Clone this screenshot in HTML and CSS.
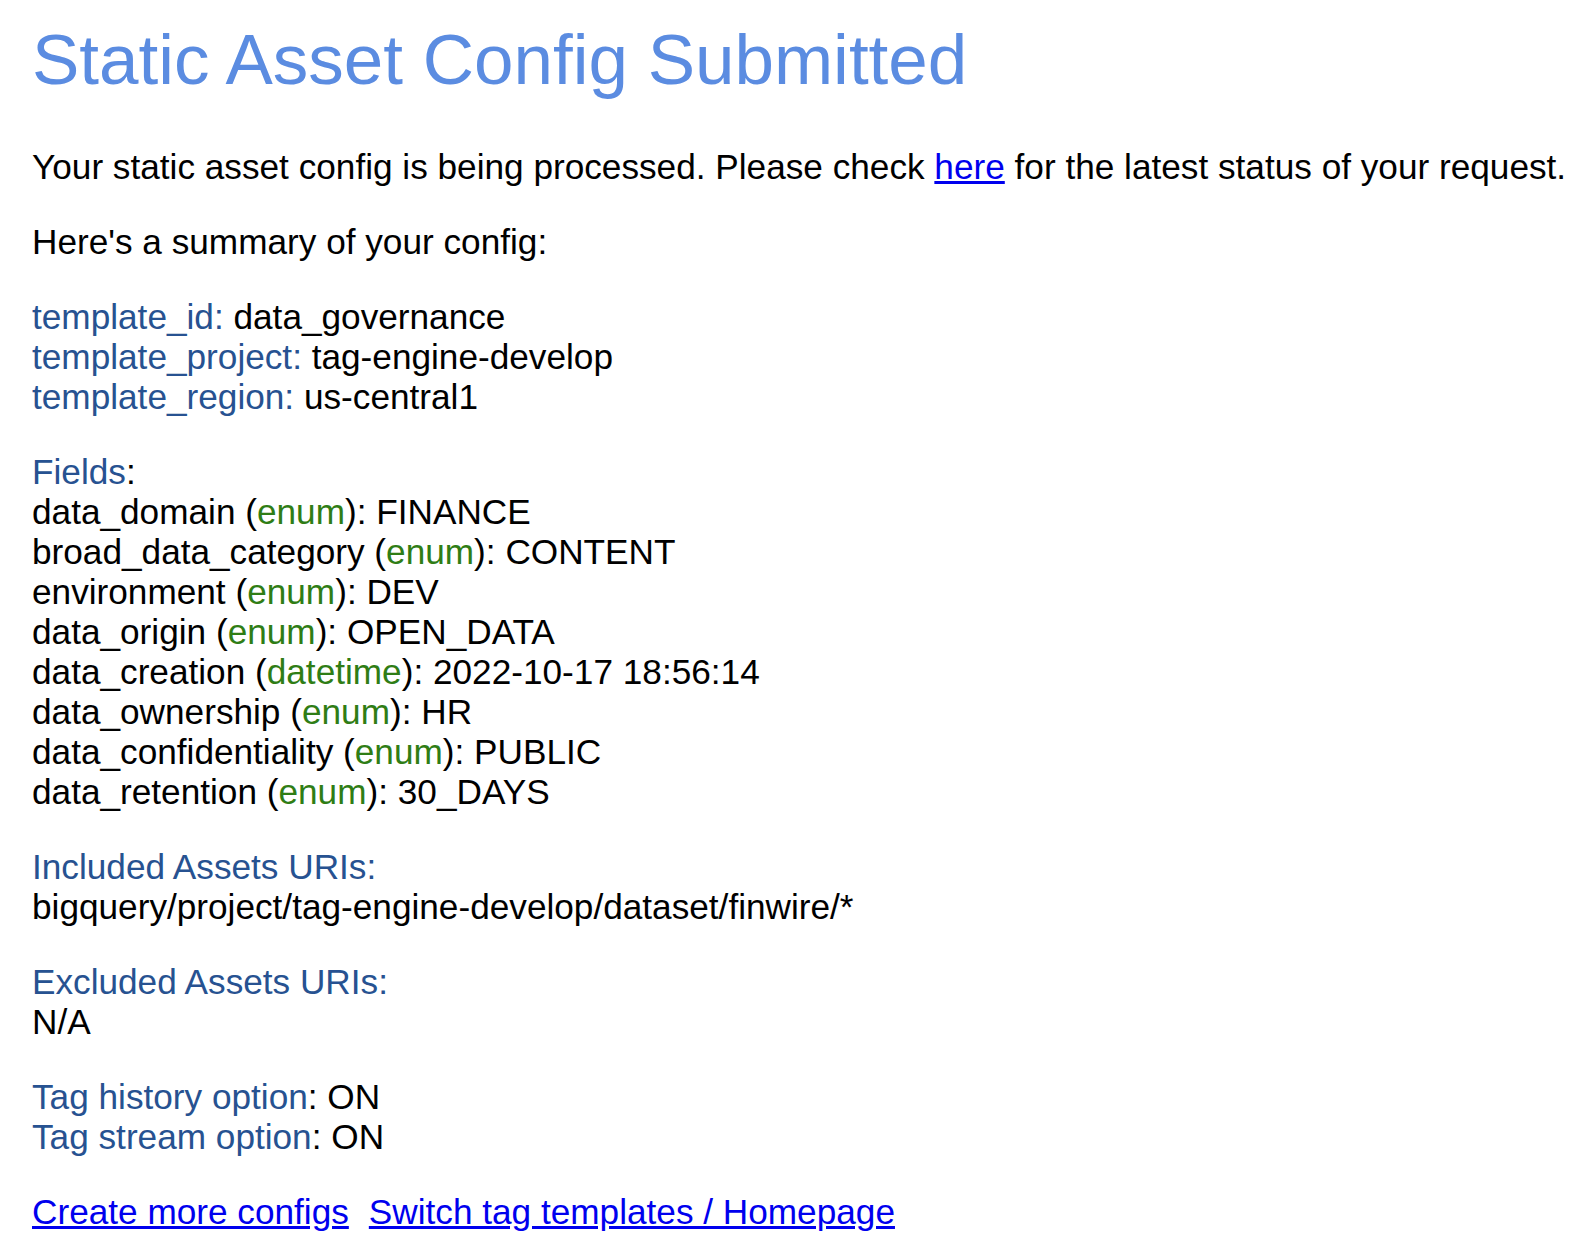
FILE: index.html
```html
<!DOCTYPE html>
<html lang="en">
<head>
<meta charset="utf-8">
<title>Static Asset Config Submitted</title>
<link rel="stylesheet" href="styles.css">
</head>
<body>
<main class="page">
  <h1 class="title">Static Asset Config Submitted</h1>

  <p class="block">Your static asset config is being processed. Please check <a href="#">here</a> for the latest status of your request.</p>

  <p class="block">Here's a summary of your config:</p>

  <div class="block">
    <div class="line"><span class="label">template_id:</span> data_governance</div>
    <div class="line"><span class="label">template_project:</span> tag-engine-develop</div>
    <div class="line"><span class="label">template_region:</span> us-central1</div>
  </div>

  <div class="block">
    <div class="line"><span class="label">Fields</span>:</div>
    <div class="line">data_domain (<span class="type">enum</span>): FINANCE</div>
    <div class="line">broad_data_category (<span class="type">enum</span>): CONTENT</div>
    <div class="line">environment (<span class="type">enum</span>): DEV</div>
    <div class="line">data_origin (<span class="type">enum</span>): OPEN_DATA</div>
    <div class="line">data_creation (<span class="type">datetime</span>): 2022-10-17 18:56:14</div>
    <div class="line">data_ownership (<span class="type">enum</span>): HR</div>
    <div class="line">data_confidentiality (<span class="type">enum</span>): PUBLIC</div>
    <div class="line">data_retention (<span class="type">enum</span>): 30_DAYS</div>
  </div>

  <div class="block">
    <div class="line"><span class="label">Included Assets URIs:</span></div>
    <div class="line">bigquery/project/tag-engine-develop/dataset/finwire/*</div>
  </div>

  <div class="block">
    <div class="line"><span class="label">Excluded Assets URIs:</span></div>
    <div class="line">N/A</div>
  </div>

  <div class="block">
    <div class="line"><span class="label">Tag history option</span>: ON</div>
    <div class="line"><span class="label">Tag stream option</span>: ON</div>
  </div>

  <nav class="block links">
    <a href="#">Create more configs</a>
    <a href="#">Switch tag templates / Homepage</a>
  </nav>
</main>
</body>
</html>
```

FILE: styles.css
```css
html, body {
  margin: 0;
  padding: 0;
  background: #ffffff;
}

body {
  font-family: "Liberation Sans", Arial, Helvetica, sans-serif;
  font-size: 35.2px;
  line-height: normal;
  color: #000000;
}

.page {
  padding: 19px 16px 20px 32px;
}

.title {
  margin: 0 0 47px 0;
  font-size: 71px;
  font-weight: normal;
  color: #5b8ce1;
  line-height: normal;
}

.block {
  margin: 0 0 35px 0;
}

.line {
  white-space: nowrap;
}

.label {
  color: #275291;
}

.type {
  color: #2f7d15;
}

a {
  color: #0000ee;
  text-decoration: underline;
}

.links {
  display: flex;
  gap: 20px;
}
```
